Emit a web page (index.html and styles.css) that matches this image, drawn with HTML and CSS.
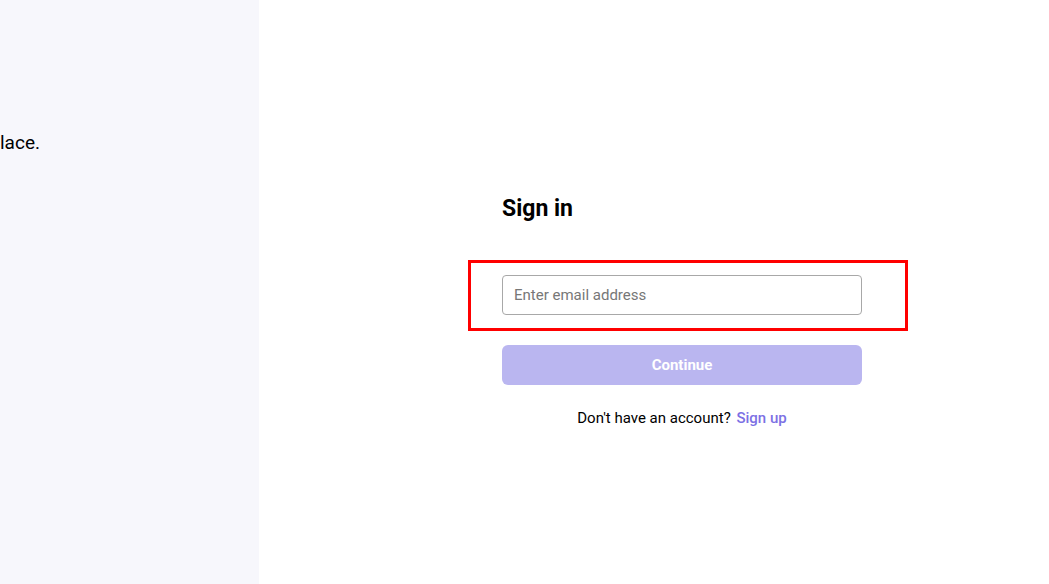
FILE: index.html
```html
<!DOCTYPE html>
<html lang="en">
<head>
<meta charset="utf-8">
<title>Sign in</title>
<link rel="stylesheet" href="styles.css">
</head>
<body>
<div class="page">
  <aside class="side">
    <p class="tagline">lace.</p>
  </aside>
  <main class="main">
    <form class="form">
      <h1 class="title">Sign in</h1>
      <div class="focus-box">
        <input class="email" type="email" placeholder="Enter email address" autofocus>
      </div>
      <button class="continue" type="button">Continue</button>
      <p class="signup">Don't have an account? <a href="#" class="signup-link">Sign up</a></p>
    </form>
  </main>
</div>
</body>
</html>
```

FILE: styles.css
```css
* { box-sizing: border-box; }
html, body {
  margin: 0;
  height: 100%;
  font-family: Roboto, "Liberation Sans", sans-serif;
  color: #000;
  background: #fff;
}
.page {
  display: flex;
  height: 584px;
}
.side {
  width: 259px;
  flex: none;
  background: #f7f7fc;
  padding-top: 131px;
}
.tagline {
  margin: 0;
  font-size: 19px;
  line-height: 24px;
  color: #000;
}
.main {
  flex: 1;
  padding-left: 243px;
  padding-top: 195px;
}
.form {
  width: 360px;
  display: flex;
  flex-direction: column;
}
.title {
  margin: 0;
  font-size: 23px;
  font-weight: 700;
  line-height: 27px;
  color: #000;
}
.focus-box {
  margin: 38px -46px 0 -34px;
  border: 3px solid #ff0000;
  padding: 12px 43px 13px 31px;
}
.email {
  display: block;
  width: 100%;
  height: 40px;
  border: 1px solid #a8a8a8;
  border-radius: 4px;
  padding: 0 11px;
  font-family: Roboto, "Liberation Sans", sans-serif;
  font-size: 15px;
  color: #000;
  caret-color: #000;
  outline: none;
  background: #fff;
}
.email::placeholder { color: #777; }
.continue {
  margin-top: 14px;
  height: 40px;
  border: none;
  border-radius: 6px;
  background: #bab6f0;
  color: #fff;
  font-family: Roboto, "Liberation Sans", sans-serif;
  font-size: 15px;
  font-weight: 700;
}
.signup {
  margin: 24px 0 0;
  text-align: center;
  font-size: 15px;
  line-height: 18px;
  color: #000;
}
.signup-link {
  color: #7c70e4;
  font-weight: 500;
  text-decoration: none;
  margin-left: 2px;
}
```
